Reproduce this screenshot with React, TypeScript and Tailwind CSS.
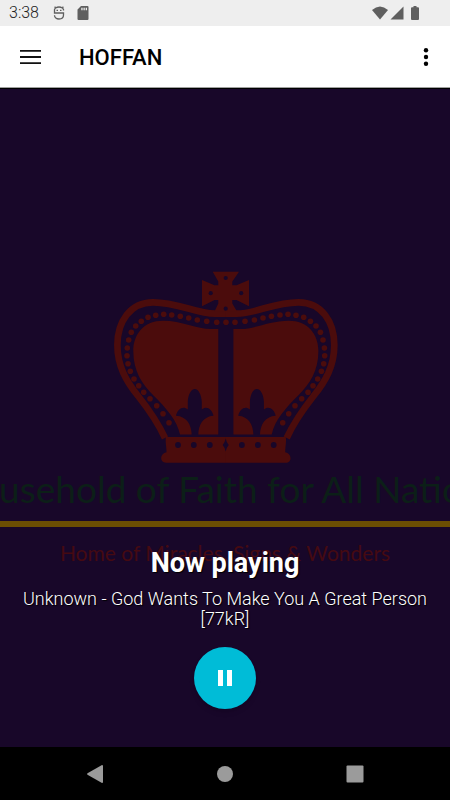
const beads = [
  [216.7, 322.3], [206.7, 321.3], [197.3, 320], [188.7, 318], [180.3, 316.3], [171.7, 315],
  [163.7, 314.3], [155.7, 315.3], [148, 317.3], [141.3, 321.3], [135.7, 326], [131.3, 332.3],
  [128.7, 340], [127.3, 348], [127, 355.7], [128, 363.7], [130.3, 371.3], [134, 379],
  [138.7, 385.7], [143.7, 392.3], [150, 398.7], [156.7, 405.7], [163, 413.7], [169, 422.7],
];

const CrownHalf = () => (
  <g>
    <path
      d="M226 313.7H215C196 313.7 178 302.3 153 302.3C130 302.3 117.4 322 117.4 345C117.4 366 126 381 138.5 396.5C148 408.5 158 423 165 438"
      fill="none"
      stroke="#4b0c0c"
      strokeWidth="6.7"
    />
    <path
      fillRule="evenodd"
      d="M218.3 329H211C197 329 182 320.7 163 320.7C144 320.7 133.3 334 133.3 351C133.3 371 142 384 153 395C166 408 177 420 180 434.6H218.3Z
        M191.7 434.6C191.3 425 187 416.5 176 415.8C177.5 409 183 405.5 187.8 409.5V402C188 395 191 389 194.8 389C198.6 389 201.5 395 201.8 402V409.5C206.5 405.5 212 409 213.5 415.8C203 416.5 198.5 425 198.3 434.6Z"
    />
    {/* base band */}
    <path
      fillRule="evenodd"
      d="M226 437H166C165 441 166.5 447 166.5 452.3C159.5 453.5 159.5 462.8 166 462.8H226Z
        M175.1 445a2.9 2.9 0 1 0 5.8 0a2.9 2.9 0 1 0-5.8 0Z
        M190.9 445a2.9 2.9 0 1 0 5.8 0a2.9 2.9 0 1 0-5.8 0Z
        M206.9 445a2.9 2.9 0 1 0 5.8 0a2.9 2.9 0 1 0-5.8 0Z"
    />
    {beads.map(([x, y]) => (
      <circle key={x + '-' + y} cx={x} cy={y} r="2.8" />
    ))}
  </g>
);

const Crown = () => (
  <svg viewBox="112 271 226 192" className="w-[226px] h-[192px] shrink-0" fill="#4b0c0c" aria-hidden="true">
    <CrownHalf />
    <g transform="matrix(-1 0 0 1 451.7 0)">
      <CrownHalf />
    </g>
    <circle cx="226" cy="322.3" r="2.8" />
    {/* cross */}
    <path d="M212.7 271.7H239L232.3 281.5V285.2H236.5L249 280V306.3L236.5 300H232.3V303.5L237 311.5H214.5L218.3 303.5V300H214.5L202 306.3V280L214.5 285.2H218.3V281.5Z" />
    <g fill="#180729">
      <circle cx="225.7" cy="278" r="2.1" />
      <circle cx="210.7" cy="293.2" r="2.1" />
      <circle cx="241.2" cy="293.2" r="2.1" />
      <circle cx="225.7" cy="308.7" r="2.1" />
      <path d="M225.7 438.5Q226.5 442.5 228.7 445Q226.5 447.5 225.7 451.5Q224.9 447.5 222.7 445Q224.9 442.5 225.7 438.5Z" />
    </g>
  </svg>
);

const StatusBar = () => (
  <div className="flex h-[26px] shrink-0 items-center bg-[#eeeeee] pl-[9px] text-[#5f5f5f]">
    <span className="w-11 text-base font-light leading-5 text-[#222222]">3:38</span>
    <svg viewBox="0 0 12 14" className="h-3.5 w-3" fill="none" stroke="currentColor" strokeWidth="1.3">
      <path d="M10.5 4.5V3.5L9.5 2L10.3 .7M1.7 .7L2.5 2L1.5 3.5V7H10.5V9C10.5 11.5 8.5 13 6 13S1.5 11.5 1.5 9.3M2.5 2Q6 0 9.5 2" />
      <path d="M3.5 4.3H5M7 4.3H8.5" />
    </svg>
    <svg viewBox="0 0 12 14" className="ml-3 h-3.5 w-3" fill="currentColor">
      <path fillRule="evenodd" d="M4 0H10.5Q11.5 0 11.5 1V13Q11.5 14 10.5 14H1.5Q.5 14 .5 13V3.5ZM4.3 1.7V4.3H5.6V1.7ZM6.5 1.7V4.3H7.8V1.7ZM8.7 1.7V4.3H10V1.7Z" />
    </svg>
    <div className="ml-auto flex items-center pr-[31px]">
      <svg viewBox="0 0 16 14" className="h-3.5 w-4" fill="currentColor">
        <path d="M8 13.5L0 4Q8-3.2 16 4Z" />
      </svg>
      <svg viewBox="0 0 14 14" className="ml-0.5 h-3.5 w-3.5" fill="currentColor">
        <path d="M13.5 .5V13.5H.5Z" />
      </svg>
      <svg viewBox="0 0 8 14" className="ml-[7px] h-3.5 w-2" fill="currentColor">
        <path d="M2.5 0H5.5V1.3H7Q8 1.3 8 2.3V13Q8 14 7 14H1Q0 14 0 13V2.3Q0 1.3 1 1.3H2.5Z" />
      </svg>
    </div>
  </div>
);

const Header = () => (
  <header className="flex h-[62px] shrink-0 items-center border-b border-[#a0a0a0] bg-white pl-5 pr-4">
    <button type="button" aria-label="Open menu">
      <svg viewBox="0 0 21 14" className="h-3.5 w-[21px]" stroke="#111111" strokeWidth="1.8">
        <path d="M0 .9H21M0 7H21M0 13.1H21" />
      </svg>
    </button>
    <h1 className="ml-[38px] pt-0.5 text-[22px] font-medium leading-7 text-black">HOFFAN</h1>
    <button type="button" aria-label="More options" className="ml-auto">
      <svg viewBox="0 0 16 18" className="h-[18px] w-4" fill="#000000">
        <circle cx="8" cy="2.3" r="2.2" />
        <circle cx="8" cy="9" r="2.2" />
        <circle cx="8" cy="15.7" r="2.2" />
      </svg>
    </button>
  </header>
);

const Artwork = () => (
  <div className="absolute inset-0 flex flex-col items-center overflow-hidden pt-[182px] font-[Lato,sans-serif]">
    <Crown />
    <p className="mt-0.5 whitespace-nowrap text-[37px] leading-[48px] text-[#0c1f18]">
      Household of Faith for All Nations
    </p>
    <div className="mt-2 h-1.5 w-full shrink-0 bg-[#6b4e03]" />
    <p className="mt-3 whitespace-nowrap text-[21px] leading-7 text-[#450a12]">
      Home of Miracles, Signs &amp; Wonders
    </p>
  </div>
);

const NavBar = () => (
  <nav className="flex h-[53px] shrink-0 items-center justify-around bg-black px-[30px] text-[#9b9b9b]">
    <button type="button" aria-label="Back">
      <svg viewBox="0 0 18 18" className="size-[18px]" fill="currentColor">
        <path d="M16 0Q17 0 17 1V17Q17 18 16 18L1.5 9.7Q.5 9 1.5 8.3Z" />
      </svg>
    </button>
    <button type="button" aria-label="Home">
      <svg viewBox="0 0 18 18" className="size-[18px]" fill="currentColor">
        <circle cx="9" cy="9" r="8" />
      </svg>
    </button>
    <button type="button" aria-label="Recent apps">
      <svg viewBox="0 0 18 18" className="size-[18px]" fill="currentColor">
        <rect x=".5" y=".5" width="17" height="17" rx="1" />
      </svg>
    </button>
  </nav>
);

export default function App() {
  return (
    <div className="flex min-h-screen flex-col font-[Roboto,sans-serif]">
      <StatusBar />
      <Header />
      <main className="relative flex flex-1 flex-col justify-end border-t border-black bg-[#180729]">
        <Artwork />
        <div className="relative flex flex-col items-center px-5 pb-[38px] text-center text-white">
          <h2 className="text-[27px] font-bold leading-8 [text-shadow:1px_1px_1px_#000]">Now playing</h2>
          <p className="mt-2.5 text-lg font-light leading-5 [text-shadow:1px_1px_1px_#000]">
            Unknown - God Wants To Make You A Great Person [77kR]
          </p>
          <button
            type="button"
            aria-label="Pause"
            className="mt-[18px] flex size-[62px] items-center justify-center rounded-full bg-[#00bcd7] shadow-md"
          >
            <svg viewBox="0 0 14 16" className="h-4 w-3.5" fill="#ffffff">
              <path d="M0 0H5V16H0ZM9 0H14V16H9Z" />
            </svg>
          </button>
        </div>
      </main>
      <NavBar />
    </div>
  );
}
